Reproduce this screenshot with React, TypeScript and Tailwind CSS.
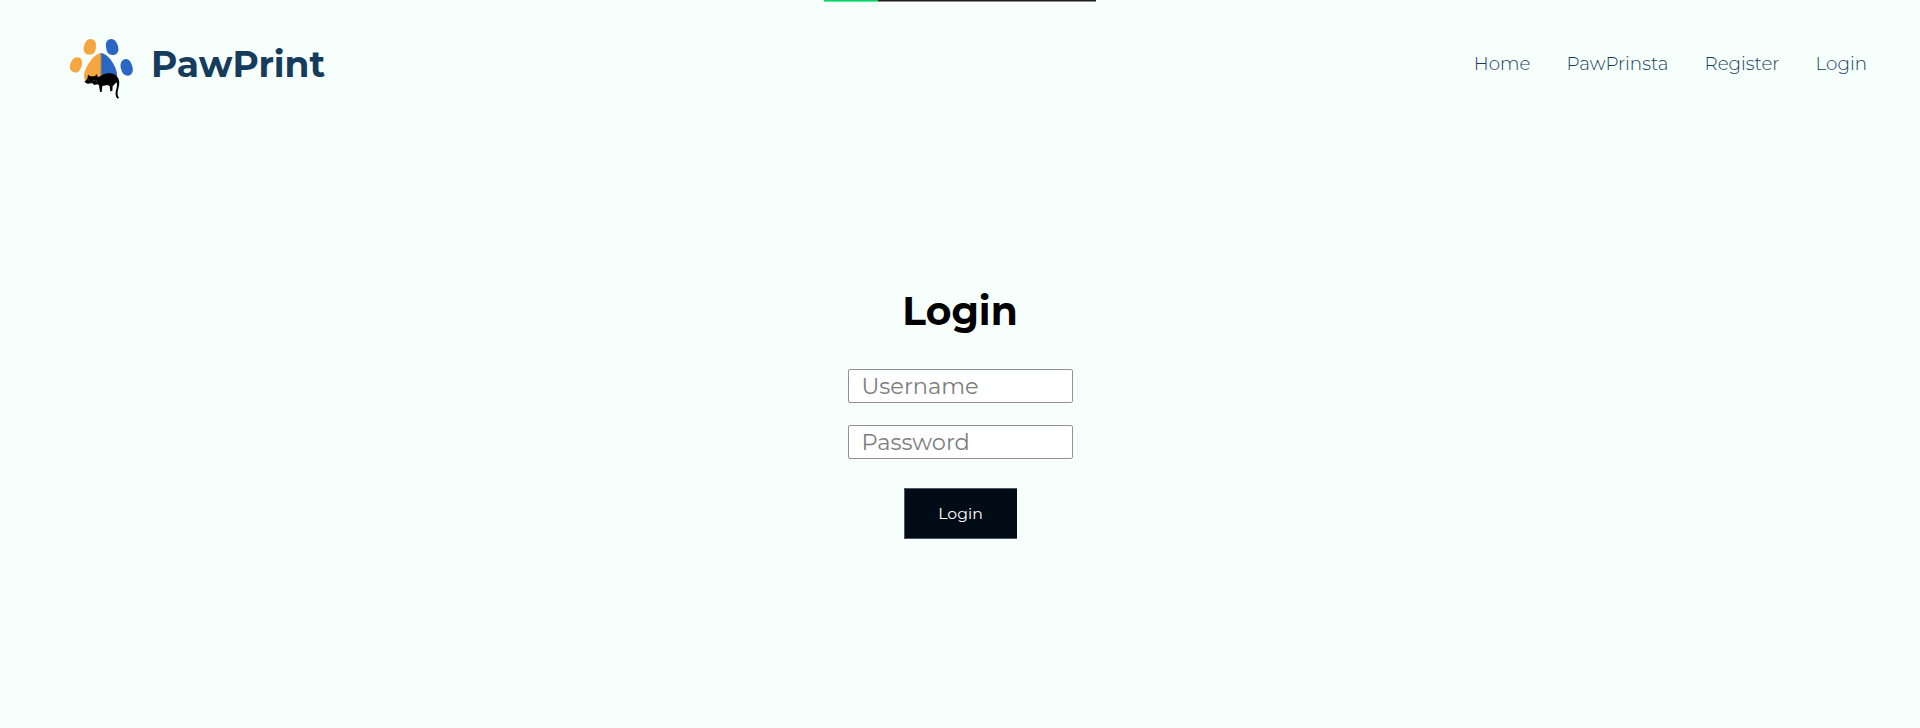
function PawLogo() {
  return (
    <svg className="h-[75px] w-20 shrink-0" viewBox="0 0 240 225" aria-hidden="true">
      <g fill="#f5a640">
        <path d="M91 27C103 27 109 36 108 49C107 66 102 74 90 74C77 74 70 67 71 55C73 39 80 27 91 27Z" />
        <path d="M50 82C61 81 68 90 66 102C63 118 57 128 46 128C34 127 28 118 30 106C33 93 40 83 50 82Z" />
        <path d="M123 69C108 71 91 88 80 111C73 125 69 139 75 150L123 150Z" />
      </g>
      <g fill="#2a67c4">
        <path d="M154 27C142 27 137 36 138 49C139 66 145 75 157 75C170 75 177 67 175 54C173 39 165 27 154 27Z" />
        <path d="M198 87C186 87 180 98 182 112C185 128 191 137 203 137C215 136 220 126 218 114C215 98 208 88 198 87Z" />
        <path d="M123 69C140 72 154 88 164 109C170 122 174 135 169 148L123 150Z" />
      </g>
      <path d="M123 69V137" stroke="#8c8a55" strokeWidth="3" />
      <path
        fill="#000"
        d="M82 146L84 134L91 139L105 139L109 132L114 141C121 140 126 133 137 131C153 127 166 132 173 142C180 153 178 165 175 176C172 186 171 195 177 203L173 206C165 199 166 187 169 177C171 169 172 162 169 157L161 166L158 168L157 183L151 184L149 168L142 165L127 168L125 186L120 186L117 166L113 163L103 165L97 160L82 161L73 155Z"
      />
      <path d="M83 151l5-2M99 151l5 1M108 151l4 6M91 157l6-1" stroke="#666" strokeWidth="2" fill="none" />
    </svg>
  );
}

const links = ["Home", "PawPrinsta", "Register", "Login"];

export default function App() {
  return (
    <div className="flex h-[728px] w-full flex-col overflow-hidden bg-[#f6fffb] font-['Montserrat','Inter',sans-serif]">
      <div className="flex h-0.5 w-[272px] shrink-0 flex-col self-center">
        <div className="flex h-px bg-[#231f20]">
          <div className="w-[54px] bg-[#00d563]" />
        </div>
        <div className="flex h-px bg-[#8d8c8b]">
          <div className="w-[54px] bg-[#62e8a1]" />
        </div>
      </div>

      <header className="flex h-[126px] shrink-0 items-start justify-between pt-7 pr-[53px] pl-[60px]">
        <div className="flex items-start">
          <PawLogo />
          <span className="mt-[9px] ml-[11px] text-[36px] leading-[50px] font-bold text-[#153c5c]">PawPrint</span>
        </div>
        <nav className="mt-5 flex gap-9 text-[18.3px] leading-7 font-[350] text-[#153c5c]">
          {links.map((label) => (
            <a key={label} href="#">
              {label}
            </a>
          ))}
        </nav>
      </header>

      <main className="flex flex-col items-center pt-[153px]">
        <h1 className="text-[39.2px] leading-[60px] font-bold text-black">Login</h1>
        <form className="mt-7 flex flex-col items-center" onSubmit={(e) => e.preventDefault()}>
          <input
            type="text"
            placeholder="Username"
            className="h-[34px] w-[225px] rounded-[2px] border border-[#929292] bg-white px-[13px] text-[22.5px] placeholder:text-[#7d7d7d]"
          />
          <input
            type="password"
            placeholder="Password"
            className="mt-[22px] h-[34px] w-[225px] rounded-[2px] border border-[#929292] bg-white px-[13px] text-[22.5px] placeholder:text-[#7d7d7d]"
          />
          <button
            type="submit"
            className="mt-[29px] h-[51px] w-[113px] border-y border-l border-[#4d5861] bg-[#020c17] text-[15.7px] text-white"
          >
            Login
          </button>
        </form>
      </main>
    </div>
  );
}
